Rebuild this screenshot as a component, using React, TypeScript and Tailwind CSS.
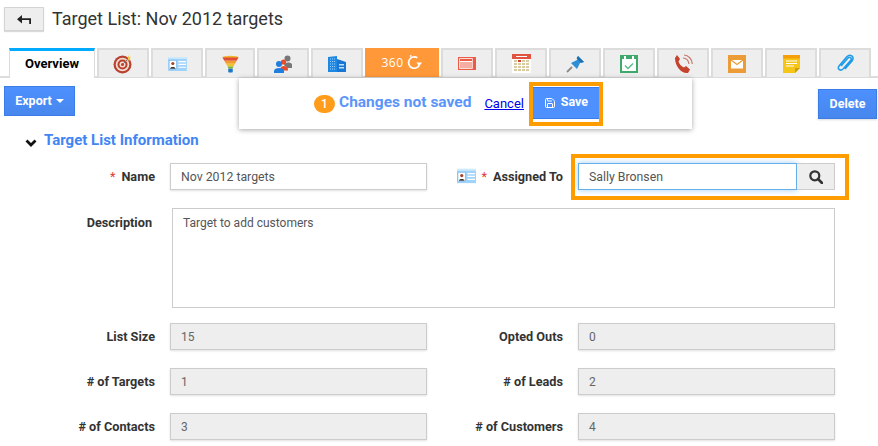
import { Save } from 'lucide-react'
import type { ReactNode } from 'react'

const CardIcon = ({ className = '' }: { className?: string }) => (
  <svg viewBox="0 0 20 15" className={className}>
    <rect x="0" y="0" width="20" height="15" fill="#9fd3fb" />
    <rect x="0" y="0" width="20" height="2" fill="#cfe9fd" />
    <rect x="1" y="3.5" width="8" height="10" fill="#fff" stroke="#5aa9e6" strokeWidth="0.6" />
    <circle cx="5" cy="7" r="1.7" fill="#a8432f" />
    <path d="M2 12.5c0-2.4 6-2.4 6 0z" fill="#333" />
    <path d="M11 5h8M11 8h8M11 11h8" stroke="#fff" strokeWidth="1.3" />
  </svg>
)

const tabIcons: { w: string; icon: ReactNode }[] = [
  {
    w: 'w-[52px]',
    icon: (
      <svg viewBox="0 0 20 20" className="w-5 h-5">
        <circle cx="9.5" cy="10.5" r="9" fill="#b8412f" />
        <circle cx="9.5" cy="10.5" r="6.8" fill="#f3ddd0" />
        <circle cx="9.5" cy="10.5" r="5" fill="#b8412f" />
        <circle cx="9.5" cy="10.5" r="3" fill="#f3ddd0" />
        <circle cx="9.5" cy="10.5" r="1.5" fill="#b8412f" />
        <path d="M10 10l6-6" stroke="#777" strokeWidth="1" />
        <path d="M15 1l1 2 2 .5-1.5 1.5.3 2-2-1z" fill="#f5c842" />
      </svg>
    ),
  },
  { w: 'w-[52px]', icon: <CardIcon className="w-[19px] h-[14px]" /> },
  {
    w: 'w-[50px]',
    icon: (
      <svg viewBox="0 0 18 18" className="w-[17px] h-[18px]">
        <ellipse cx="9" cy="2" rx="8.5" ry="1.8" fill="#f0b429" />
        <path d="M.5 2h17l-2 3.5h-13z" fill="#e04b3a" />
        <path d="M2.5 5.5h13l-1.8 3.2H4.3z" fill="#f39c2d" />
        <path d="M4.3 8.7h9.4l-1.7 3H6z" fill="#f2c12e" />
        <path d="M6 11.7h6l-.8 2.3H6.8z" fill="#7cb342" />
        <rect x="6.6" y="14" width="4.8" height="4" rx="0.8" fill="#1f77c9" />
      </svg>
    ),
  },
  {
    w: 'w-[52px]',
    icon: (
      <svg viewBox="0 0 19 18" className="w-[19px] h-[18px]">
        <circle cx="13.5" cy="3.5" r="3" fill="#777" />
        <path d="M10 10c0-3 7-3.5 8-.5v3.5h-5z" fill="#777" />
        <circle cx="9.5" cy="7" r="2.6" fill="#ea4b2a" />
        <path d="M6 15c0-5 7-5 8-1v1.500H8z" fill="#ea4b2a" />
        <circle cx="5" cy="9" r="3" fill="#1f7fe0" />
        <path d="M0 18v-2c0-4 10-4 10 0v2z" fill="#1f7fe0" />
      </svg>
    ),
  },
  {
    w: 'w-[52px]',
    icon: (
      <svg viewBox="0 0 18 16" className="w-[18px] h-4">
        <path d="M0 1l9-1v16H0z" fill="#1e88e5" />
        <path d="M9 3l9 3v10H9z" fill="#1976d2" />
        <path d="M2 3h5M2 5.500h5M2 8h5M2 10.500h5M2 13h5" stroke="#9ed0fa" strokeWidth="1" strokeDasharray="1 1" />
        <rect x="11" y="8" width="5" height="1.500" fill="#bfe0fb" />
        <rect x="11" y="11" width="5" height="1.500" fill="#bfe0fb" />
      </svg>
    ),
  },
]

const tabIconsRight: ReactNode[] = [
  <svg viewBox="0 0 18 13" className="w-[18px] h-[13px]">
    <rect width="18" height="13" fill="#ec5b45" />
    <rect x="1.200" y="1.200" width="13.500" height="10.600" fill="#fff" />
    <rect x="2" y="2" width="12" height="2" fill="#ec5b45" />
    <path d="M2 6h12M2 8h12M2 10h12" stroke="#ec5b45" strokeWidth="1" />
  </svg>,
  <svg viewBox="0 0 19 19" className="w-[19px] h-[19px]">
    <rect width="19" height="19" fill="#fff" />
    <rect width="19" height="5" fill="#e2533f" />
    <rect x="4" y="2" width="11" height="1" fill="#fff" />
    <path d="M2 7h15M2 10h15M2 13h15M2 16h15" stroke="#d8cba0" strokeWidth="2" strokeDasharray="3 1" />
    <rect x="6" y="6" width="3" height="2" fill="#d8412f" />
  </svg>,
  <svg viewBox="0 0 19 18" className="w-[19px] h-[18px]">
    <path d="M1 17l5-5" stroke="#8a8a8a" strokeWidth="1.800" />
    <path d="M5 8l6-3 1-4 6 6-4 1-3 6z" fill="#2e8fd6" />
    <path d="M12 1l6 6-3 .8-4.500-4.500z" fill="#1c6fb0" />
  </svg>,
  <svg viewBox="0 0 18 18" className="w-[18px] h-[18px]">
    <rect width="18" height="18" fill="#3fa96b" />
    <rect x="2" y="4" width="14" height="12" fill="#fff" />
    <rect x="4" y="1" width="2" height="3" fill="#fff" />
    <rect x="12" y="1" width="2" height="3" fill="#fff" />
    <path d="M5 10.500l3 3 5-5" fill="none" stroke="#56c08a" strokeWidth="1.500" />
  </svg>,
  <svg viewBox="0 0 19 20" className="w-[19px] h-5">
    <path d="M3 1l3 4-1.500 2.500c1 3 3 5 5.500 6L12 12l4 3.500-2 3.500C7 20 1 12 1 4z" fill="#c5432c" />
    <path d="M9 4c3 .2 5.500 2.500 6 6M10 1c4.500.3 8 4 8.300 9" fill="none" stroke="#c77a6b" strokeWidth="1.200" />
  </svg>,
  <svg viewBox="0 0 18 18" className="w-[18px] h-[18px]">
    <rect width="18" height="18" fill="#ec9c36" />
    <rect x="3" y="5" width="12" height="8.500" fill="#fff" />
    <path d="M3 5l6 4.500L15 5" fill="none" stroke="#ec9c36" strokeWidth="1.200" />
  </svg>,
  <svg viewBox="0 0 17 18" className="w-[17px] h-[18px]">
    <path d="M0 0h17v13l-5 5H0z" fill="#f5c518" />
    <rect width="17" height="3.500" fill="#f59f0a" />
    <path d="M3 6h11M3 8.500h11M3 11h8" stroke="#fff" strokeWidth="1" />
    <path d="M12 18v-5h5z" fill="#c9a013" />
  </svg>,
  <svg viewBox="0 0 18 20" className="w-[18px] h-5">
    <path
      d="M5 12l7-8c1.500-1.500 4-.2 3 2l-8 9c-2.500 2.500-6 0-4-3l8-9.500c3-3 8 0 5 4.500l-7 8"
      fill="none"
      stroke="#1e9be8"
      strokeWidth="1.500"
    />
  </svg>,
]

const tabClass =
  'h-[29px] flex items-center justify-center bg-[#eeeeee] border-2 border-b-0 border-[#dcdcdc]'

const Label = ({ children, required }: { children: string; required?: boolean }) => (
  <span className="pt-px text-[12.7px] font-bold text-[#333] text-right">
    {required && <span className="text-[#e53935] font-normal mr-[6px]">*</span>}
    {children}
  </span>
)

const ReadOnly = ({ value }: { value: string }) => (
  <div className="h-[27px] border border-[#ccc] bg-[#eeeeee] shadow-[0_1px_2px_rgba(0,0,0,0.12)] px-[10px] text-[12px] leading-[26px] text-[#666]">
    {value}
  </div>
)

const rows = [
  ['List Size', '15', 'Opted Outs', '0'],
  ['# of Targets', '1', '# of Leads', '2'],
  ['# of Contacts', '3', '# of Customers', '4'],
]

export default function App() {
  return (
    <div className="relative w-[878px] h-[446px] overflow-hidden bg-white font-['Roboto','Liberation_Sans',sans-serif]">
      {/* Header */}
      <div className="flex items-center pl-1 pt-[7px] h-[48px] pb-[17px]">
        <button className="w-10 h-6 flex items-center justify-center bg-[#eeeeee] border border-[#d4d4d4] shadow-[0_1px_1px_rgba(0,0,0,0.15)]">
          <svg viewBox="0 0 14 9" className="w-[14px] h-[9px]">
            <path d="M5 0v3.200h9V9h-1.800V5H5v3.500L0 4.200z" fill="#222" />
          </svg>
        </button>
        <h1 className="ml-2 text-[18px] leading-6 text-[#333]">Target List: Nov 2012 targets</h1>
      </div>

      {/* Tabs */}
      <div className="flex items-start h-[30px] pl-[9px] gap-[2px] border-b-2 border-[#dcdcdc]">
        <div className="w-[86px] h-[30px] -mb-px pb-[2px] flex items-center justify-center bg-white border-t-[3px] border-t-[#00aaff] border-x border-x-[#dcdcdc] text-[13px] font-bold text-black">
          Overview
        </div>
        {tabIcons.map((tab, i) => (
          <div key={i} className={`${tab.w} ${tabClass}`}>
            {tab.icon}
          </div>
        ))}
        <div className="w-[74px] h-[29px] flex items-center justify-center gap-[2px] bg-[#ff9838] text-white">
          <span className="text-[12px] tracking-[0.5px] font-['Open_Sans',sans-serif]">360</span>
          <svg viewBox="0 0 18 18" className="w-[17px] h-[17px]">
            <path d="M14 12a6 6 0 1 1-2-8" fill="none" stroke="#fff" strokeWidth="1.800" />
            <path d="M11 9h6l-3 4z" fill="#fff" />
            <circle cx="5" cy="2" r="1" fill="#fff" />
          </svg>
        </div>
        {tabIconsRight.map((icon, i) => (
          <div key={i} className={`w-[52px] ${tabClass}`}>
            {icon}
          </div>
        ))}
      </div>

      {/* Actions */}
      <div className="flex items-start justify-between pl-1 pr-px pt-[8px] h-[51px]">
        <button className="w-[71px] h-[30px] flex items-center justify-center gap-1 bg-gradient-to-b from-[#4d90fe] to-[#4787ed] border border-[#3b7de8] text-white text-[12.500px] font-bold">
          Export
          <span className="w-0 h-0 border-x-[4px] border-x-transparent border-t-[4px] border-t-white" />
        </button>
        <button className="mt-[3px] w-[59px] h-[30px] bg-gradient-to-b from-[#4d90fe] to-[#4787ed] border border-[#3b7de8] text-white text-[12.500px] font-bold shadow-[0_1px_2px_rgba(0,0,0,0.15)]">
          Delete
        </button>
      </div>

      {/* Unsaved changes popup */}
      <div className="absolute left-[239px] top-[78px] w-[453px] h-[51px] bg-white shadow-[0_1px_5px_rgba(0,0,0,0.35)] flex items-center pl-[75px]">
        <span className="w-[21px] h-[18px] rounded-full bg-[#ff9c1a] text-white text-[12px] font-medium leading-[18px] text-center">1</span>
        <span className="ml-1 -mt-[2px] text-[15.500px] font-bold text-[#5b95f9]">Changes not saved</span>
        <a className="ml-[13px] text-[13px] text-[#0000ee] underline">Cancel</a>
        <div className="ml-[5px] w-[74px] h-11 border-4 border-[#ff9c00] bg-white pt-px">
          <button className="w-full h-[32px] flex items-center justify-center gap-[5px] bg-[#4d90fe] border-y border-y-[#3b7de8] text-white text-[12.500px] font-bold">
            <Save size={12} />
            Save
          </button>
        </div>
      </div>

      {/* Section title */}
      <div className="flex items-center pl-[25px] h-[23px]">
        <svg viewBox="0 0 12 8" className="w-3 h-2 mt-1">
          <path d="M1.500 1.500L6 6l4.500-4.500" fill="none" stroke="#111" strokeWidth="2.800" />
        </svg>
        <h2 className="ml-[7px] text-[15px] font-bold text-[#4285f4]">Target List Information</h2>
      </div>

      {/* Form */}
      <div className="pt-[11px]">
        <div className="grid grid-cols-[155px_257px_121px_257px] gap-x-[15px] items-center">
          <Label required>Name</Label>
          <div className="h-[27px] border border-[#ccc] bg-white shadow-[0_1px_2px_rgba(0,0,0,0.12)] px-[10px] text-[12.300px] leading-[26px] text-[#555]">
            Nov 2012 targets
          </div>
          <div className="flex items-center justify-end whitespace-nowrap">
            <CardIcon className="w-[19px] h-4 mr-[5px]" />
            <Label required>Assigned To</Label>
          </div>
          <div className="relative flex h-[27px]">
            <div className="flex-1 border border-[#66afe9] shadow-[0_0_6px_rgba(102,175,233,0.6)] bg-white px-[10px] text-[12.300px] leading-[26px] text-[#555]">
              Sally Bronsen
            </div>
            <div className="w-[38px] flex items-center justify-center bg-[#eeeeee] border border-l-0 border-[#ccc]">
              <svg viewBox="0 0 14 14" className="w-[14px] h-[14px]">
                <circle cx="5.800" cy="5.800" r="4.500" fill="none" stroke="#333" strokeWidth="2.200" />
                <path d="M9 9l4 4" stroke="#333" strokeWidth="2.600" strokeLinecap="round" />
              </svg>
            </div>
            <div className="absolute -left-[7px] -top-[9px] w-[278px] h-[46px] border-4 border-[#ff9c00]" />
          </div>
        </div>

        <div className="flex mt-[18px]">
          <div className="w-[152px] text-right pt-[5px] text-[12.700px] font-bold text-[#333]">Description</div>
          <div className="ml-[20px] w-[663px] h-[100px] border border-[#ccc] px-[10px] py-[5px] text-[12px] text-[#555]">
            Target to add customers
          </div>
        </div>

        <div className="mt-[15px] flex flex-col gap-[18px]">
          {rows.map((row) => (
            <div key={row[0]} className="grid grid-cols-[155px_257px_121px_257px] gap-x-[15px] items-center">
              <Label>{row[0]}</Label>
              <ReadOnly value={row[1]} />
              <Label>{row[2]}</Label>
              <ReadOnly value={row[3]} />
            </div>
          ))}
        </div>
      </div>
    </div>
  )
}
